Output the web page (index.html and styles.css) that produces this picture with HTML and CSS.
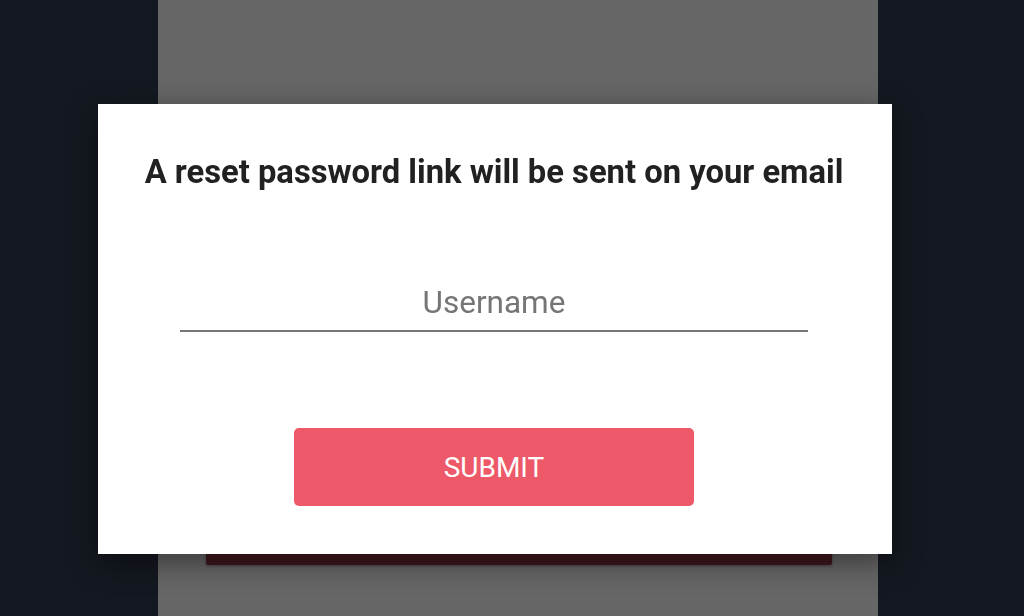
FILE: index.html
```html
<!DOCTYPE html>
<html lang="en">
<head>
<meta charset="utf-8">
<title>Reset password</title>
<link rel="stylesheet" href="styles.css">
</head>
<body>
  <div class="page">
    <div class="page-bar"></div>
  </div>
  <div class="modal">
    <h2 class="modal-title">A reset password link will be sent on your email</h2>
    <input class="modal-input" type="text" placeholder="Username">
    <button class="modal-button" type="button">SUBMIT</button>
  </div>
</body>
</html>
```

FILE: styles.css
```css
html, body {
  margin: 0;
  padding: 0;
  height: 100%;
}

body {
  background: #141820;
  font-family: Roboto, "Liberation Sans", sans-serif;
  overflow: hidden;
}

.page {
  width: 720px;
  height: 616px;
  margin-left: 158px;
  background: #666666;
  box-sizing: border-box;
  padding: 520px 46px 0 48px;
}

.page-bar {
  height: 45px;
  background: #3f181d;
  border-radius: 0 0 2px 2px;
  box-shadow: 0 1px 3px rgba(0, 0, 0, 0.35);
}

.modal {
  position: fixed;
  left: 98px;
  top: 104px;
  width: 794px;
  height: 450px;
  background: #ffffff;
  box-shadow: 0 8px 28px rgba(0, 0, 0, 0.45);
  display: flex;
  flex-direction: column;
  align-items: center;
  box-sizing: border-box;
  padding: 50px 2px 0 0;
}

.modal-title {
  margin: 0;
  font-size: 32.75px;
  line-height: 36px;
  font-weight: 700;
  color: #212121;
  text-align: center;
  white-space: nowrap;
}

.modal-input {
  margin: 85px 0 0 0;
  width: 628px;
  height: 55px;
  padding: 0;
  border: none;
  border-bottom: 2px solid #767676;
  outline: none;
  background: transparent;
  font-family: Roboto, "Liberation Sans", sans-serif;
  font-size: 31.5px;
  color: #212121;
  text-align: center;
  box-sizing: content-box;
}

.modal-input::placeholder {
  color: #757575;
  opacity: 1;
}

.modal-button {
  margin-top: 96px;
  width: 400px;
  height: 78px;
  border: none;
  border-radius: 5px;
  background: #ee5969;
  color: #ffffff;
  font-family: Roboto, "Liberation Sans", sans-serif;
  font-size: 28px;
  font-weight: 400;
  cursor: pointer;
}
```
